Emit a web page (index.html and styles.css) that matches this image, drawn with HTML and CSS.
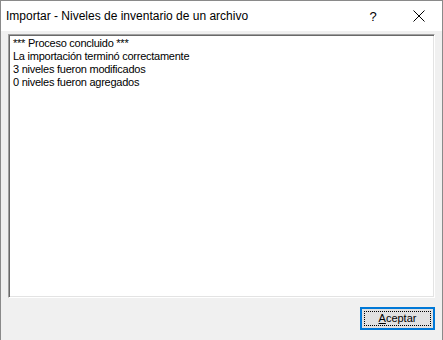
FILE: index.html
```html
<!DOCTYPE html>
<html lang="es">
<head>
  <meta charset="UTF-8">
  <title>Importar</title>
  <link rel="stylesheet" href="styles.css">
</head>
<body>
  <div class="window">
    <div class="titlebar">
      <span class="title">Importar - Niveles de inventario de un archivo</span>
      <span class="help">?</span>
      <span class="close">
        <svg width="12" height="12" viewBox="0 0 12 12"><path d="M0.5 0.5 L11.5 11.5 M11.5 0.5 L0.5 11.5" stroke="#000" stroke-width="1" fill="none"/></svg>
      </span>
    </div>
    <div class="client">
      <div class="log">
        <div>*** Proceso concluido ***</div>
        <div>La importación terminó correctamente</div>
        <div>3 niveles fueron modificados</div>
        <div>0 niveles fueron agregados</div>
      </div>
      <div class="actions">
        <button class="btn"><span class="focus"><u>A</u>ceptar</span></button>
      </div>
    </div>
  </div>
</body>
</html>
```

FILE: styles.css
```css
body {
  margin: 0;
  width: 443px;
  height: 340px;
  overflow: hidden;
  font-family: "Liberation Sans", Arial, sans-serif;
}

.window {
  width: 443px;
  height: 340px;
  box-sizing: border-box;
  border: 1px solid #8a8a8a;
  border-bottom: none;
  display: flex;
  flex-direction: column;
}

.titlebar {
  height: 30px;
  background: #fff;
  display: flex;
  align-items: center;
  font-size: 12px;
  color: #000;
}

.title {
  padding-left: 5px;
  flex: 1;
}

.help {
  width: 46px;
  text-align: center;
  font-size: 13px;
}

.close {
  width: 46px;
  display: flex;
  justify-content: center;
}

.client {
  flex: 1;
  background: #f0f0f0;
  padding: 3px 7px 10px 7px;
  display: flex;
  flex-direction: column;
}

.log {
  height: 258px;
  background: #fff;
  border-top: 1px solid #a0a0a0;
  border-left: 1px solid #a0a0a0;
  border-right: 1px solid #fff;
  border-bottom: 1px solid #fff;
  box-shadow: inset 1px 1px 0 #696969, inset -1px -1px 0 #e3e3e3;
  padding: 2px 4px;
  font-family: "Liberation Sans Narrow", "Liberation Sans", Arial, sans-serif;
  font-size: 11px;
  letter-spacing: -0.25px;
  line-height: 13px;
  color: #000;
}

.actions {
  display: flex;
  justify-content: flex-end;
  margin-top: 9px;
}

.btn {
  width: 75px;
  height: 23px;
  padding: 2px;
  border: 2px solid #0078d7;
  background: #e1e1e1;
  font-family: inherit;
  font-size: 11px;
  color: #000;
  margin: 0;
  box-sizing: border-box;
}

.focus {
  display: block;
  height: 100%;
  border: 1px dotted #000;
  box-sizing: border-box;
  line-height: 13px;
}
```
